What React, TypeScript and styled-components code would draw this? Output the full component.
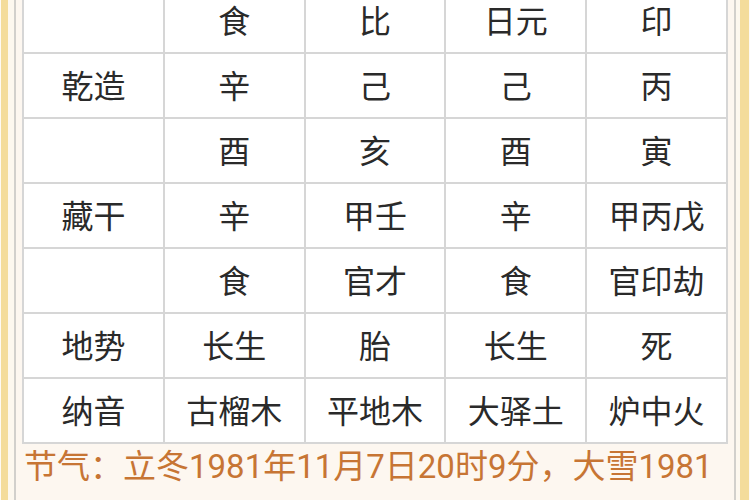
import React from "react";
import styled, { createGlobalStyle } from "styled-components";

const Global = createGlobalStyle`
  html, body { margin: 0; padding: 0; background: #fefaf4; }
  body { font-family: "Noto Sans CJK SC", "Noto Sans", sans-serif; }
`;

const Page = styled.div`
  width: 750px;
  height: 500px;
  overflow: hidden;
  box-sizing: border-box;
  padding: 0 1px;
  display: flex;
`;

const Frame = styled.div`
  flex: 1;
  display: flex;
  border-left: 7px solid #f4dc9b;
  border-right: 9px solid #f4dc9b;
  padding: 0 4px 0 6px;
  background: #fdf8ef;
`;

const Panel = styled.div`
  flex: 1;
  border-left: 2px solid #d2d0cc;
  border-right: 2px solid #d2d0cc;
  padding: 0 6px;
  background: #fdf7f0;
`;

const Table = styled.div`
  margin-top: -13px;
  display: grid;
  grid-template-columns: repeat(5, 1fr);
  grid-auto-rows: 65px;
  border-left: 2px solid #d6d6d6;
  border-top: 2px solid #d6d6d6;
  background: #ffffff;
`;

const Cell = styled.div`
  display: flex;
  align-items: center;
  justify-content: center;
  border-right: 2px solid #d6d6d6;
  border-bottom: 2px solid #d6d6d6;
  font-size: 32px;
  color: #2a2a2a;
  line-height: 1;
  padding-bottom: 3px;
`;

const Note = styled.div`
  font-family: Roboto, "Noto Sans CJK SC", sans-serif;
  font-size: 33px;
  line-height: 46px;
  color: #c77534;
  white-space: nowrap;
  padding-left: 2px;
`;

const rows: string[][] = [
  ["", "食", "比", "日元", "印"],
  ["乾造", "辛", "己", "己", "丙"],
  ["", "酉", "亥", "酉", "寅"],
  ["藏干", "辛", "甲壬", "辛", "甲丙戊"],
  ["", "食", "官才", "食", "官印劫"],
  ["地势", "长生", "胎", "长生", "死"],
  ["纳音", "古榴木", "平地木", "大驿土", "炉中火"],
];

export default function App() {
  return (
    <>
      <Global />
      <Page>
        <Frame>
          <Panel>
            <Table>
              {rows.map((r, i) =>
                r.map((c, j) => <Cell key={`${i}-${j}`}>{c}</Cell>)
              )}
            </Table>
            <Note>节气：立冬1981年11月7日20时9分，大雪1981</Note>
          </Panel>
        </Frame>
      </Page>
    </>
  );
}
